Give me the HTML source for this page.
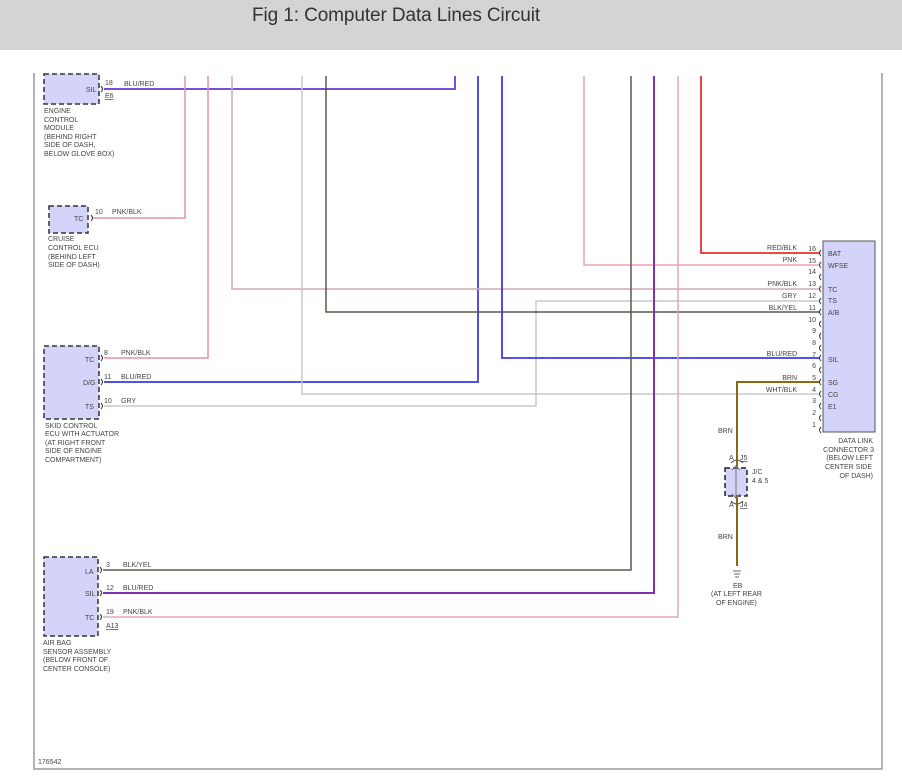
<!DOCTYPE html>
<html><head><meta charset="utf-8"><style>
html,body{margin:0;padding:0;background:#fff;width:902px;height:781px;overflow:hidden}
.hdr{position:absolute;left:0;top:0;width:902px;height:50px;background:#d4d4d4}
.hdr span{position:absolute;left:252px;top:5px;font:19px "Liberation Sans",sans-serif;color:#333;letter-spacing:-0.1px}
svg{position:absolute;left:0;top:0}
text{font-family:"Liberation Sans",sans-serif;font-size:7px;fill:#444}
</style></head><body>
<div class="hdr"><span>Fig 1: Computer Data Lines Circuit</span></div>
<svg width="902" height="781" viewBox="0 0 902 781">
<g fill="none">
<polyline points="34,73 34,769 882,769 882,73" stroke="#999" stroke-width="1.5"/>
<polyline points="104,89 455,89 455,76" stroke="#7a4cd8" stroke-width="2"/>
<polyline points="93,218 185,218 185,76" stroke="#e890a0" stroke-width="1.5"/>
<polyline points="104,358 208,358 208,76" stroke="#e890a0" stroke-width="1.5"/>
<polyline points="104,382 478,382 478,76" stroke="#5050f0" stroke-width="2"/>
<polyline points="104,406 536,406 536,301 820,301" stroke="#c8c8c8" stroke-width="1.5"/>
<polyline points="232,76 232,289 820,289" stroke="#d0a8b0" stroke-width="1.5"/>
<polyline points="302,76 302,394 820,394" stroke="#c8c8c8" stroke-width="1.5"/>
<polyline points="326,76 326,312 820,312" stroke="#5a5a48" stroke-width="1.5"/>
<polyline points="502,76 502,358 820,358" stroke="#3a3af0" stroke-width="1.8"/>
<polyline points="584,76 584,265 820,265" stroke="#f0a0b0" stroke-width="1.5"/>
<polyline points="701,76 701,253 820,253" stroke="#e83030" stroke-width="1.8"/>
<polyline points="631,76 631,570 103,570" stroke="#5a5a48" stroke-width="1.5"/>
<polyline points="654,76 654,593 103,593" stroke="#8030b0" stroke-width="2"/>
<polyline points="678,76 678,617 103,617" stroke="#e0a8b8" stroke-width="1.5"/>
<polyline points="820,382 737,382 737,566" stroke="#8a6a10" stroke-width="2"/>
<rect x="44" y="74" width="55" height="30" fill="#d4d4fa" stroke="#333" stroke-dasharray="5,3" stroke-width="1.5"/>
<rect x="49" y="206" width="39" height="27" fill="#d4d4fa" stroke="#333" stroke-dasharray="5,3" stroke-width="1.5"/>
<rect x="44" y="346" width="55" height="73" fill="#d4d4fa" stroke="#333" stroke-dasharray="5,3" stroke-width="1.5"/>
<rect x="44" y="557" width="54" height="79" fill="#d4d4fa" stroke="#333" stroke-dasharray="5,3" stroke-width="1.5"/>
<rect x="823" y="241" width="52" height="191" fill="#d4d4fa" stroke="#555" stroke-width="1"/>
<rect x="725" y="468" width="22" height="28" fill="#d4d4fa" stroke="#222" stroke-dasharray="5,3" stroke-width="1.5"/>
<line x1="736" y1="466" x2="736" y2="498" stroke="#777" stroke-width="1"/>
<path d="M732,470 L736,466 L740,470 M732,494 L736,498 L740,494" stroke="#777"/>
<path d="M731,463 Q737,457 743,463 M731,501 Q737,507 743,501" stroke="#555"/>
<g stroke="#333" stroke-width="1">
<path d="M101,86 q3,3 0,6 M91,215 q3,3 0,6 M101,355 q3,3 0,6 M101,379 q3,3 0,6 M101,403 q3,3 0,6 M100,567 q3,3 0,6 M100,590 q3,3 0,6 M100,614 q3,3 0,6"/>
<path d="M821,250 q-3,3 0,6 M821,262 q-3,3 0,6 M821,274 q-3,3 0,6 M821,286 q-3,3 0,6 M821,298 q-3,3 0,6 M821,309 q-3,3 0,6 M821,321 q-3,3 0,6 M821,333 q-3,3 0,6 M821,345 q-3,3 0,6 M821,355 q-3,3 0,6 M821,367 q-3,3 0,6 M821,379 q-3,3 0,6 M821,391 q-3,3 0,6 M821,403 q-3,3 0,6 M821,415 q-3,3 0,6 M821,427 q-3,3 0,6"/>
</g>
<path d="M733,571 h8 M734,574 h6 M735,577 h4" stroke="#666"/>
</g>
<text x="86" y="92">SIL</text><text x="105" y="85">18</text><text x="124" y="86">BLU/RED</text><text x="105" y="98" text-decoration="underline">E6</text>
<text x="44" y="113">ENGINE</text><text x="44" y="122">CONTROL</text><text x="44" y="130">MODULE</text><text x="44" y="139">(BEHIND RIGHT</text><text x="44" y="147">SIDE OF DASH,</text><text x="44" y="156">BELOW GLOVE BOX)</text>
<text x="74" y="221">TC</text><text x="95" y="214">10</text><text x="112" y="214">PNK/BLK</text>
<text x="48" y="241">CRUISE</text><text x="48" y="250">CONTROL ECU</text><text x="48" y="259">(BEHIND LEFT</text><text x="48" y="267">SIDE OF DASH)</text>
<text x="85" y="362">TC</text><text x="104" y="355">8</text><text x="121" y="355">PNK/BLK</text>
<text x="83" y="385">D/G</text><text x="104" y="379">11</text><text x="121" y="379">BLU/RED</text>
<text x="85" y="409">TS</text><text x="104" y="403">10</text><text x="121" y="403">GRY</text>
<text x="45" y="428">SKID CONTROL</text><text x="45" y="436">ECU WITH ACTUATOR</text><text x="45" y="445">(AT RIGHT FRONT</text><text x="45" y="453">SIDE OF ENGINE</text><text x="45" y="462">COMPARTMENT)</text>
<text x="85" y="574">LA</text><text x="106" y="567">3</text><text x="123" y="567">BLK/YEL</text>
<text x="85" y="596">SIL</text><text x="106" y="590">12</text><text x="123" y="590">BLU/RED</text>
<text x="85" y="620">TC</text><text x="106" y="614">19</text><text x="123" y="614">PNK/BLK</text><text x="106" y="628" text-decoration="underline">A13</text>
<text x="43" y="645">AIR BAG</text><text x="43" y="654">SENSOR ASSEMBLY</text><text x="43" y="662">(BELOW FRONT OF</text><text x="43" y="671">CENTER CONSOLE)</text>
<text x="38" y="764">176542</text>
<g text-anchor="end">
<text x="797" y="250">RED/BLK</text><text x="797" y="262">PNK</text><text x="797" y="286">PNK/BLK</text><text x="797" y="298">GRY</text><text x="797" y="310">BLK/YEL</text><text x="797" y="356">BLU/RED</text><text x="797" y="380">BRN</text><text x="797" y="392">WHT/BLK</text>
<text x="816" y="251">16</text><text x="816" y="263">15</text><text x="816" y="274">14</text><text x="816" y="286">13</text><text x="816" y="298">12</text><text x="816" y="310">11</text><text x="816" y="322">10</text><text x="816" y="333">9</text><text x="816" y="345">8</text><text x="816" y="357">7</text><text x="816" y="368">6</text><text x="816" y="380">5</text><text x="816" y="392">4</text><text x="816" y="403">3</text><text x="816" y="415">2</text><text x="816" y="427">1</text>
<text x="873" y="443">DATA LINK</text><text x="874" y="452">CONNECTOR 3</text><text x="873" y="460">(BELOW LEFT</text><text x="872" y="469">CENTER SIDE</text><text x="873" y="478">OF DASH)</text>
</g>
<text x="828" y="256">BAT</text><text x="828" y="268">WFSE</text><text x="828" y="292">TC</text><text x="828" y="303">TS</text><text x="828" y="315">A/B</text><text x="828" y="362">SIL</text><text x="828" y="385">SG</text><text x="828" y="397">CG</text><text x="828" y="409">E1</text>
<text x="718" y="433">BRN</text><text x="729" y="460">A</text><text x="740" y="460" text-decoration="underline">J5</text>
<text x="752" y="474">J/C</text><text x="752" y="483">4 &amp; 5</text>
<text x="729" y="507">A</text><text x="740" y="507" text-decoration="underline">J4</text>
<text x="718" y="539">BRN</text>
<text x="733" y="588">EB</text><text x="711" y="596">(AT LEFT REAR</text><text x="716" y="605">OF ENGINE)</text>
</svg>
</body></html>
